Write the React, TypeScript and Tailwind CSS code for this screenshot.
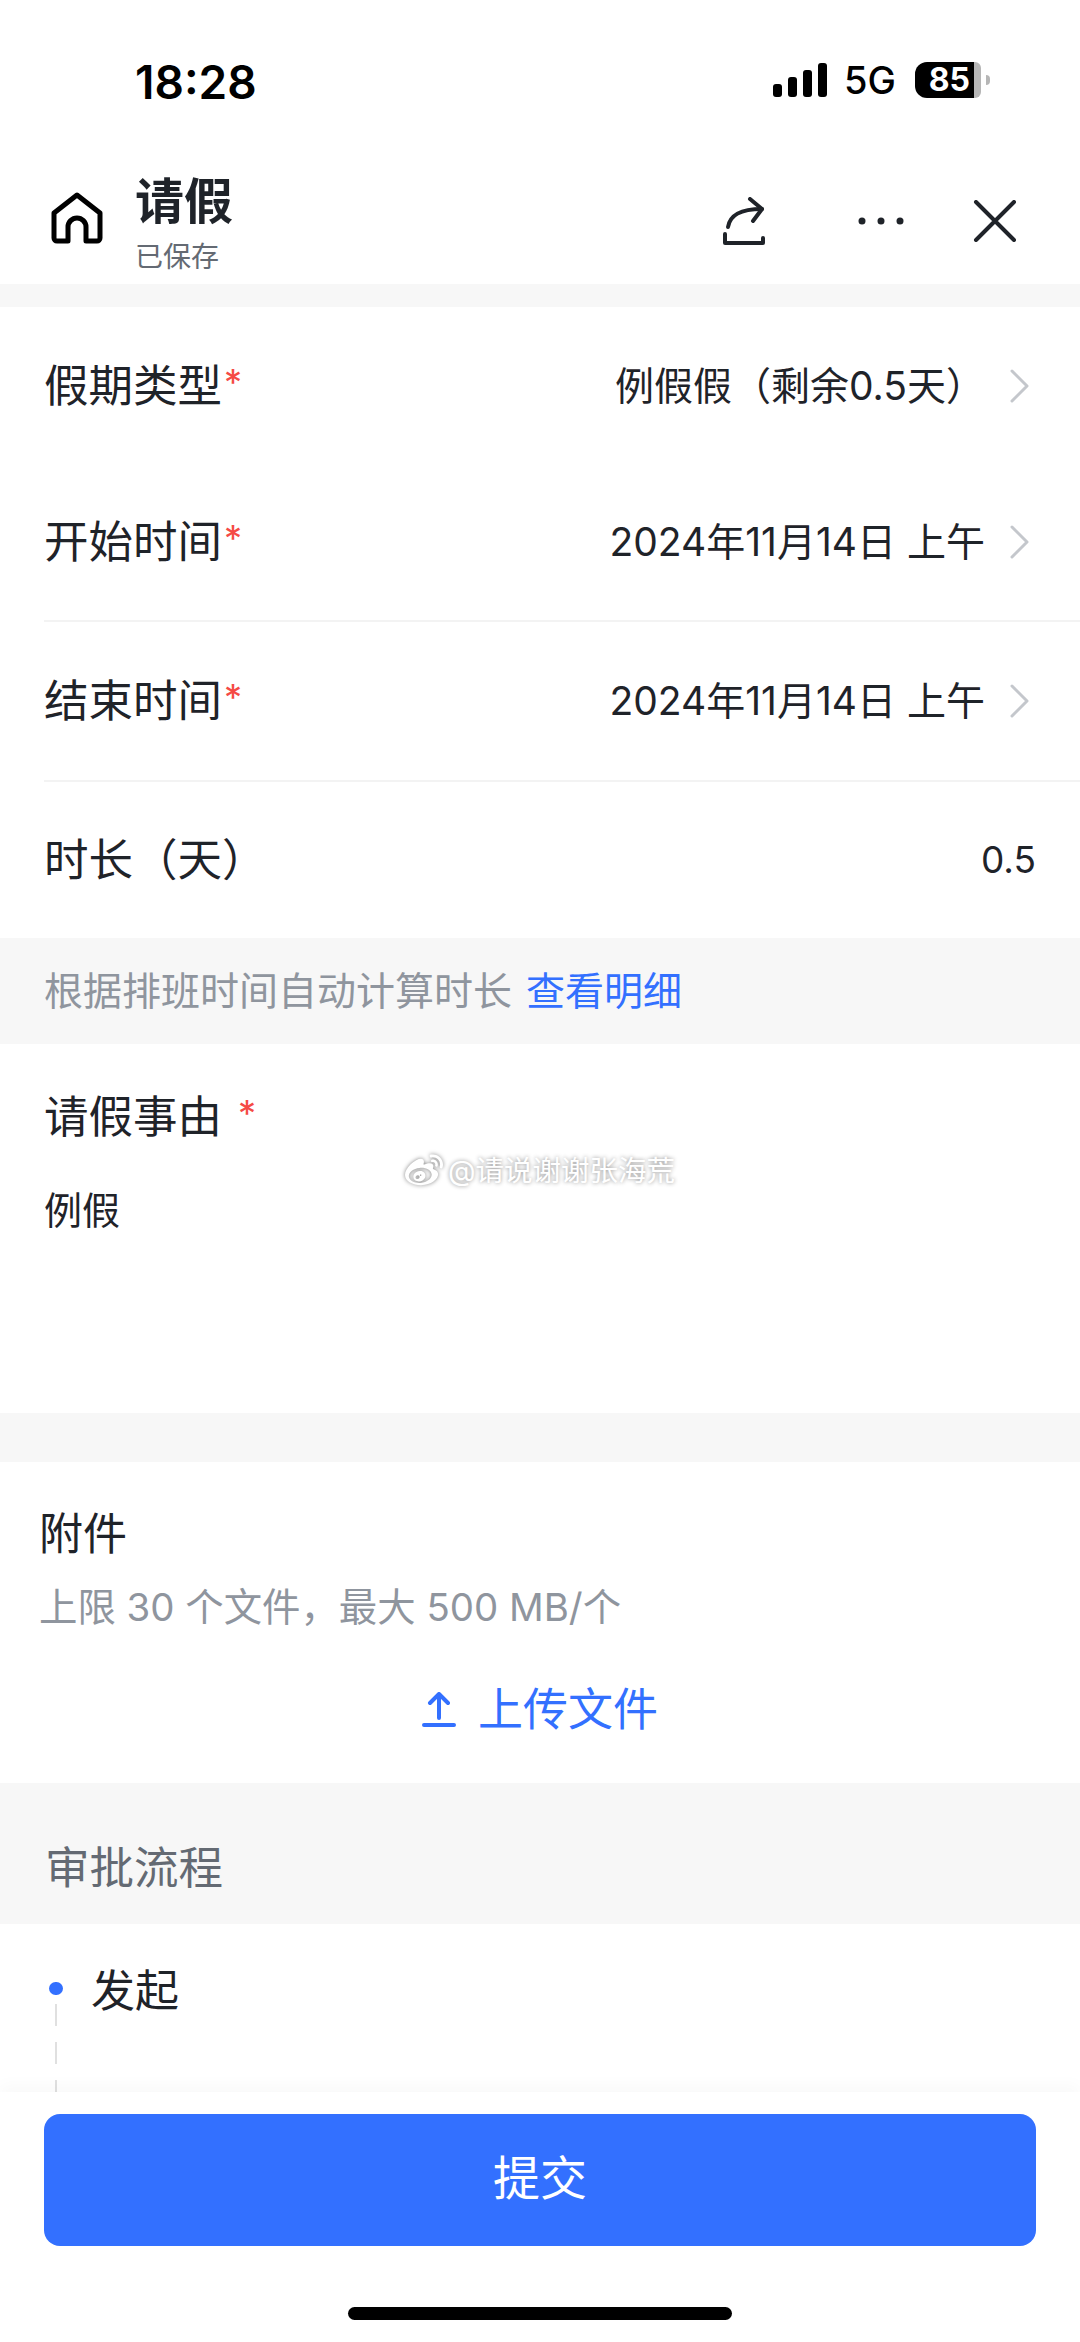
import { FaWeibo } from 'react-icons/fa'

const rows = [
	{ label: '假期类型', value: '例假假（剩余0.5天）', height: 'h-[157px]', divider: false },
	{ label: '开始时间', value: '2024年11月14日 上午', height: 'h-[158px]', divider: true },
	{ label: '结束时间', value: '2024年11月14日 上午', height: 'h-[160px]', divider: true },
]

function Chevron() {
	return (
		<svg viewBox="0 0 22 34" className="h-[34px] w-[22px] flex-none" fill="none">
			<path d="M3 2l15 15L3 32" stroke="#c4c7cc" strokeWidth="3" strokeLinecap="round" strokeLinejoin="round" />
		</svg>
	)
}

function StatusBar() {
	return (
		<div className="flex h-[164px] items-start justify-between pl-[135px] pr-[90px] pt-[53px] text-black">
			<span className="text-[46px] leading-[58px] font-semibold">18:28</span>
			<div className="flex items-center pt-[9px]">
				<div className="flex items-end gap-[6px]">
					<div className="h-[13px] w-[9px] rounded-[3px] bg-black" />
					<div className="h-[20px] w-[9px] rounded-[3px] bg-black" />
					<div className="h-[27px] w-[9px] rounded-[3px] bg-black" />
					<div className="h-[34px] w-[9px] rounded-[3px] bg-black" />
				</div>
				<span className="ml-[17px] text-[38px] leading-[36px] font-medium">5G</span>
				<div className="ml-[19px] flex h-[36px] w-[66px]">
					<div className="flex w-[59px] items-center justify-end rounded-l-[12px] bg-black pr-[4px] text-[32px] leading-[36px] font-bold text-white">
						85
					</div>
					<div className="flex-1 rounded-r-[6px] bg-[#b6b6b6]" />
				</div>
				<div className="ml-[5px] h-[10px] w-[4px] rounded-r-full bg-[#b6b6b6]" />
			</div>
		</div>
	)
}

function Header() {
	return (
		<div className="relative flex h-[120px] items-start pl-[50px]">
			<svg viewBox="0 0 54 52" className="mt-[28px] h-[52px] w-[54px] flex-none" fill="none">
				<path
					d="M4 21L27 3l23 18v25a3 3 0 0 1-3 3H36V35a9 9 0 0 0-18 0v14H7a3 3 0 0 1-3-3z"
					stroke="#000"
					strokeWidth="5"
					strokeLinejoin="round"
				/>
			</svg>
			<div className="ml-[31px] pt-[10px]">
				<div className="text-[49px] leading-[56px] font-bold text-[#1f2329]">请假</div>
				<div className="mt-[9px] text-[28px] leading-[36px] text-[#646a73]">已保存</div>
			</div>
			<div className="ml-auto flex items-center pr-[63px] pt-[33px]">
				<svg viewBox="0 0 44 48" className="h-[48px] w-[44px]" fill="none" stroke="#1f2329" strokeWidth="4" strokeLinecap="round" strokeLinejoin="round">
					<path d="M3 37v9h38v-5" />
					<path d="M6 30c2-12 12-18 34-18" />
					<path d="M28 2l12 10-9 12" />
				</svg>
				<svg viewBox="0 0 46 8" className="ml-[92px] h-[8px] w-[46px]" fill="#1f2329">
					<circle cx="4" cy="4" r="3.5" />
					<circle cx="23" cy="4" r="3.5" />
					<circle cx="42" cy="4" r="3.5" />
				</svg>
				<svg viewBox="0 0 44 42" className="ml-[69px] h-[42px] w-[44px]" fill="none" stroke="#1f2329" strokeWidth="4" strokeLinecap="round">
					<path d="M3 2l38 38M41 2L3 40" />
				</svg>
			</div>
		</div>
	)
}

export default function App() {
	return (
		<div className="relative flex h-[2342px] w-[1080px] flex-col overflow-hidden bg-white font-['Inter','Noto_Sans_CJK_SC',sans-serif] text-[#1f2329]">
			<StatusBar />
			<Header />

			<div className="flex-1 overflow-hidden">
				<div className="h-[23px] bg-[#f7f7f7]" />

				{rows.map((row) => (
					<div key={row.label} className={`pl-[44px] ${row.height}`}>
						<div className={`flex h-full items-center pr-[49px] ${row.divider ? 'border-b-2 border-[#f3f3f3]' : ''}`}>
							<span className="text-[44.5px] leading-[60px]">{row.label}</span>
							<span className="mb-[8px] ml-[2px] text-[36px] leading-none text-[#f54a45]">*</span>
							<span className="ml-auto text-[39px] leading-[52px]">{row.value}</span>
							<div className="ml-[24px]">
								<Chevron />
							</div>
						</div>
					</div>
				))}
				<div className="flex h-[156px] items-center justify-between pl-[44px] pr-[44px]">
					<span className="text-[44.5px] leading-[60px]">时长（天）</span>
					<span className="text-[37px] leading-[52px]">0.5</span>
				</div>

				<div className="flex h-[106px] items-center bg-[#f7f7f7] pl-[44px] text-[39px] leading-[52px] text-[#8f959e]">
					根据排班时间自动计算时长
					<span className="ml-[14px] text-[#3370ff]">查看明细</span>
				</div>

				<div className="h-[369px] pl-[44px] pt-[43px]">
					<div className="flex items-center">
						<span className="text-[44.5px] leading-[60px]">请假事由</span>
						<span className="mb-[8px] ml-[16px] text-[36px] leading-none text-[#f54a45]">*</span>
					</div>
					<div className="mt-[37px] text-[38px] leading-[52px]">例假</div>
				</div>

				<div className="h-[49px] bg-[#f7f7f7]" />

				<div className="h-[321px] pl-[39px] pt-[42px]">
					<div className="text-[44px] leading-[60px]">附件</div>
					<div className="mt-[17px] text-[38.4px] leading-[52px] text-[#8f959e]">上限 30 个文件，最大 500 MB/个</div>
					<div className="mt-[47px] flex items-center justify-center pr-[39px] text-[#3370ff]">
						<svg viewBox="0 0 34 36" className="h-[36px] w-[34px]" fill="none" stroke="#3370ff" strokeWidth="4" strokeLinecap="round" strokeLinejoin="round">
							<path d="M17 26V3M8 11l9-9 9 9M2 33h30" />
						</svg>
						<span className="ml-[22px] text-[45px] leading-[60px]">上传文件</span>
					</div>
				</div>

				<div className="flex h-[141px] items-center bg-[#f7f7f7] pl-[45px] pt-[28px] text-[44.5px] leading-[60px] text-[#646a73]">
					审批流程
				</div>

				<div className="flex items-start pl-[49px] pt-[37px]">
					<div className="flex w-[14px] flex-col items-center pt-[21px]">
						<div className="h-[13px] w-[14px] rounded-full bg-[#3370ff]" />
						<div className="mt-[9px] h-[22px] w-[2px] bg-[#e0e0e0]" />
						<div className="mt-[16px] h-[22px] w-[2px] bg-[#e0e0e0]" />
						<div className="mt-[16px] h-[22px] w-[2px] bg-[#e0e0e0]" />
					</div>
					<span className="ml-[28px] text-[44px] leading-[60px]">发起</span>
				</div>
			</div>

			<div className="relative h-[250px] flex-none bg-white px-[44px] pt-[22px] shadow-[0_-8px_14px_rgba(0,0,0,0.025)]">
				<div className="flex h-[132px] items-center justify-center rounded-[16px] bg-[#3370ff] pb-[4px] text-[47px] text-white">
					提交
				</div>
				<div className="mx-auto mt-[61px] h-[13px] w-[384px] rounded-full bg-black" />
			</div>

			{/* weibo handle stamped over the form */}
			<div className="absolute left-[403px] top-[1151px] flex items-center text-[28.5px] leading-[40px] text-white [text-shadow:0_0_4px_rgba(0,0,0,0.45)]">
				<FaWeibo className="h-[38px] w-[42px] drop-shadow-[0_0_2px_rgba(0,0,0,0.5)]" />
				<span className="ml-[3px]">@请说谢谢张海荒</span>
			</div>
		</div>
	)
}
